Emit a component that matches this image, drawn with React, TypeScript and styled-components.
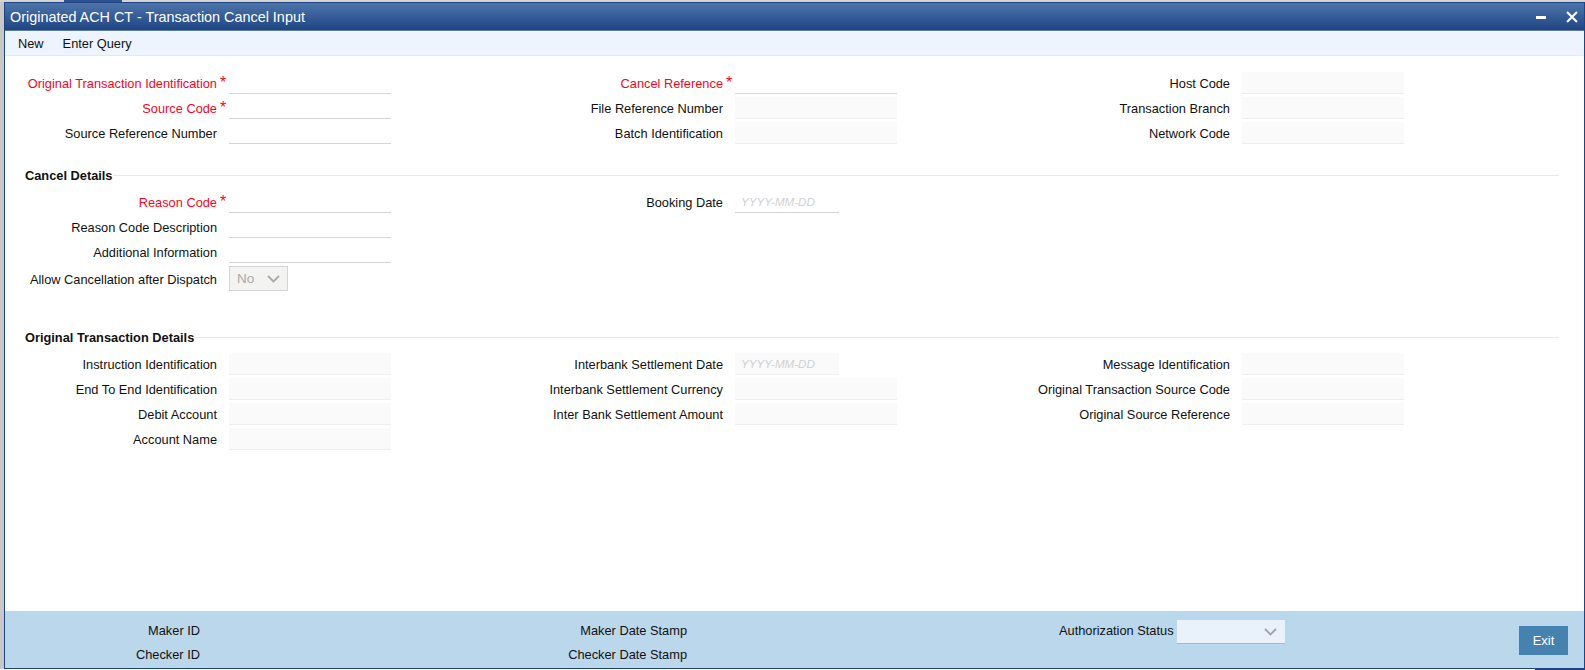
import React from 'react'
import styled, { createGlobalStyle } from 'styled-components'

const GlobalStyle = createGlobalStyle`
  html, body {
    margin: 0;
    padding: 0;
    height: 100%;
    background: #fff;
    overflow: hidden;
  }
  body {
    font-family: "Liberation Sans", Arial, sans-serif;
    font-size: 12.8px;
    color: #000;
  }
`

const Desktop = styled.div`
  width: 1585px;
  height: 670px;
  display: flex;
  flex-direction: column;
  background: #fff;
`

const TopStrip = styled.div`
  height: 2px;
  background: #d4d4d4;
  padding-left: 64px;
`

const ActiveTab = styled.div`
  width: 58px;
  height: 2px;
  background: #2c5290;
`

const DesktopBody = styled.div`
  height: 667px;
  display: flex;
  background: #fff;
`

const LeftStrip = styled.div`
  width: 4px;
  background: #c8c8c8;
`

const Window = styled.div`
  flex: 1;
  display: flex;
  flex-direction: column;
  border: 1px solid #1f4484;
  min-width: 0;
`

const TitleBar = styled.div`
  height: 27px;
  display: flex;
  align-items: center;
  padding: 0 6px 0 5px;
  background: linear-gradient(to bottom, #4d75aa, #1f4484);
  border-bottom: 1px solid #5d7f95;
  color: #fff;
  font-size: 14.4px;
`

const Title = styled.div`
  flex: 1;
`

const WindowButton = styled.svg`
  display: block;
  width: 12px;
  height: 12px;
  margin-left: 18px;
`

const Toolbar = styled.div`
  height: 24px;
  display: flex;
  align-items: center;
  gap: 19px;
  padding-left: 13px;
  background: #edf4fe;
  border-bottom: 1px solid #e6e9ef;
  color: #111;
`

const FormArea = styled.div`
  flex: 1;
  padding-top: 15px;
`

const Columns = styled.div`
  display: grid;
  grid-template-columns: 506px 507px 506px;
`

const Column = styled.div`
  display: flex;
  flex-direction: column;
  gap: 2px;
`

const Field = styled.div`
  display: flex;
  align-items: center;
  height: 23px;
`

const SelectField = styled(Field)`
  margin-top: 2px;
`

const Label = styled.label<{ $required?: boolean }>`
  width: 212px;
  padding-top: 2px;
  text-align: right;
  white-space: nowrap;
  color: ${props => (props.$required ? '#f4061c' : '#111')};
`

const Mark = styled.span`
  width: 12px;
  padding-left: 3px;
  box-sizing: border-box;
  color: #f4061c;
  font-size: 16px;
  line-height: 12px;
  align-self: flex-start;
  margin-top: 6px;
`

const TextInput = styled.div<{ $readOnly?: boolean; $short?: boolean }>`
  width: ${props => (props.$short ? 104 : 162)}px;
  height: 22px;
  box-sizing: border-box;
  padding: 0 6px;
  display: flex;
  align-items: center;
  background: ${props => (props.$readOnly ? '#fafafa' : '#fff')};
  border-bottom: 1px solid ${props => (props.$readOnly ? '#eeeeee' : '#d4d4d4')};
  font-size: 11.6px;
  font-style: italic;
  color: #d0d0d0;
`

const SelectBox = styled.div`
  width: 59px;
  height: 25px;
  box-sizing: border-box;
  display: flex;
  align-items: center;
  justify-content: space-between;
  padding: 0 7px;
  background: #f3f3f1;
  border: 1px solid #d4d4d4;
  font-size: 13.5px;
  color: #aaa;
`

const Chevron = styled.svg`
  display: block;
  width: 13px;
  height: 8px;
`

const SectionHeading = styled.div<{ $top: number; $bottom: number }>`
  display: flex;
  align-items: center;
  margin: ${props => props.$top}px 25px ${props => props.$bottom}px 20px;
  font-weight: bold;
  color: #111;
  white-space: nowrap;

  &::after {
    content: '';
    flex: 1;
    height: 1px;
    background: #e9e9e9;
  }
`

const Footer = styled.div`
  height: 57px;
  display: flex;
  background: #bbd7ec;
  color: #111;
`

const FooterColumn = styled.div<{ $width: number }>`
  width: ${props => props.$width}px;
  padding-top: 12px;
  display: flex;
  flex-direction: column;
  gap: 8px;
  text-align: right;
  white-space: nowrap;
`

const FooterLabel = styled.div`
  height: 16px;
  line-height: 16px;
`

const StatusField = styled.div`
  display: flex;
  align-items: flex-start;
  gap: 3px;
  margin-left: 372px;
  padding-top: 9px;
  line-height: 22px;
  white-space: nowrap;
`

const StatusSelect = styled.div`
  width: 108px;
  height: 24px;
  box-sizing: border-box;
  display: flex;
  align-items: center;
  justify-content: flex-end;
  padding-right: 8px;
  background: #e9f1fa;
  border-bottom: 1px solid #aab6c2;
`

const ExitButton = styled.button`
  width: 49px;
  height: 29px;
  margin: 15px 16px 0 auto;
  border: 0;
  padding: 0;
  background: #4682b0;
  color: #fff;
  font-family: inherit;
  font-size: 13px;
`

const BottomStrip = styled.div`
  height: 1px;
  display: flex;
  justify-content: flex-end;
  background: #fff;
`

const BottomTab = styled.div`
  width: 50px;
  background: #1f4484;
`

interface FieldDef {
  label: string
  required?: boolean
  readOnly?: boolean
  date?: boolean
}

const renderField = (field: FieldDef) => (
  <Field key={field.label}>
    <Label $required={field.required}>{field.label}</Label>
    <Mark>{field.required ? '*' : ''}</Mark>
    <TextInput $readOnly={field.readOnly} $short={field.date}>
      {field.date ? 'YYYY-MM-DD' : ''}
    </TextInput>
  </Field>
)

const top: FieldDef[][] = [
  [
    { label: 'Original Transaction Identification', required: true },
    { label: 'Source Code', required: true },
    { label: 'Source Reference Number' }
  ],
  [
    { label: 'Cancel Reference', required: true },
    { label: 'File Reference Number', readOnly: true },
    { label: 'Batch Identification', readOnly: true }
  ],
  [
    { label: 'Host Code', readOnly: true },
    { label: 'Transaction Branch', readOnly: true },
    { label: 'Network Code', readOnly: true }
  ]
]

const original: FieldDef[][] = [
  [
    { label: 'Instruction Identification', readOnly: true },
    { label: 'End To End Identification', readOnly: true },
    { label: 'Debit Account', readOnly: true },
    { label: 'Account Name', readOnly: true }
  ],
  [
    { label: 'Interbank Settlement Date', readOnly: true, date: true },
    { label: 'Interbank Settlement Currency', readOnly: true },
    { label: 'Inter Bank Settlement Amount', readOnly: true }
  ],
  [
    { label: 'Message Identification', readOnly: true },
    { label: 'Original Transaction Source Code', readOnly: true },
    { label: 'Original Source Reference', readOnly: true }
  ]
]

const DownArrow: React.FC<{ color: string }> = ({ color }) => (
  <Chevron viewBox="0 0 13 8">
    <path d="M1 1l5.5 5.5L12 1" fill="none" stroke={color} strokeWidth="1.8" />
  </Chevron>
)

const App: React.FC = () => (
  <Desktop>
    <GlobalStyle />
    <TopStrip>
      <ActiveTab />
    </TopStrip>
    <DesktopBody>
      <LeftStrip />
      <Window>
        <TitleBar>
          <Title>Originated ACH CT - Transaction Cancel Input</Title>
          <WindowButton viewBox="0 0 12 12">
            <path d="M0 5h10v3H0z" fill="#fff" />
          </WindowButton>
          <WindowButton viewBox="0 0 12 12">
            <path d="M1 1l10 10M11 1L1 11" stroke="#fff" strokeWidth="2" fill="none" />
          </WindowButton>
        </TitleBar>
        <Toolbar>
          <span>New</span>
          <span>Enter Query</span>
        </Toolbar>
        <FormArea>
          <Columns>
            {top.map((column, index) => (
              <Column key={index}>{column.map(renderField)}</Column>
            ))}
          </Columns>
          <SectionHeading $top={24} $bottom={7}>Cancel Details</SectionHeading>
          <Columns>
            <Column>
              {renderField({ label: 'Reason Code', required: true })}
              {renderField({ label: 'Reason Code Description' })}
              {renderField({ label: 'Additional Information' })}
              <SelectField>
                <Label>Allow Cancellation after Dispatch</Label>
                <Mark />
                <SelectBox>
                  No
                  <DownArrow color="#aaa" />
                </SelectBox>
              </SelectField>
            </Column>
            <Column>{renderField({ label: 'Booking Date', date: true })}</Column>
          </Columns>
          <SectionHeading $top={40} $bottom={7}>Original Transaction Details</SectionHeading>
          <Columns>
            {original.map((column, index) => (
              <Column key={index}>{column.map(renderField)}</Column>
            ))}
          </Columns>
        </FormArea>
        <Footer>
          <FooterColumn $width={195}>
            <FooterLabel>Maker ID</FooterLabel>
            <FooterLabel>Checker ID</FooterLabel>
          </FooterColumn>
          <FooterColumn $width={487}>
            <FooterLabel>Maker Date Stamp</FooterLabel>
            <FooterLabel>Checker Date Stamp</FooterLabel>
          </FooterColumn>
          <StatusField>
            Authorization Status
            <StatusSelect>
              <DownArrow color="#9aa5ae" />
            </StatusSelect>
          </StatusField>
          <ExitButton>Exit</ExitButton>
        </Footer>
      </Window>
    </DesktopBody>
    <BottomStrip>
      <BottomTab />
    </BottomStrip>
  </Desktop>
)

export default App
